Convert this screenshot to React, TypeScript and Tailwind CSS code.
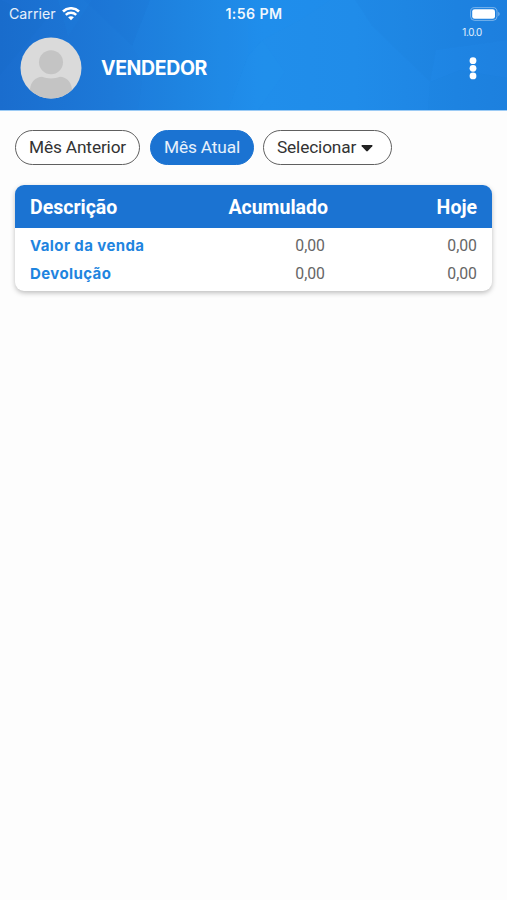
import { clsx } from 'clsx';

type Row = { label: string; total: string; today: string };

const ROWS: Row[] = [
  { label: 'Valor da venda', total: '0,00', today: '0,00' },
  { label: 'Devolução', total: '0,00', today: '0,00' },
];

function HeaderBackground() {
  return (
    <svg
      className="absolute inset-0 size-full"
      viewBox="0 0 507 110"
      preserveAspectRatio="none"
      aria-hidden="true"
    >
      <defs>
        <linearGradient id="sky" x1="0" y1="0" x2="1" y2="0">
          <stop offset="0" stopColor="#1a6dce" />
          <stop offset="0.22" stopColor="#1d79d8" />
          <stop offset="0.36" stopColor="#1e83e1" />
          <stop offset="0.52" stopColor="#208eeb" />
          <stop offset="0.7" stopColor="#208ce9" />
          <stop offset="0.9" stopColor="#1e84e3" />
          <stop offset="1" stopColor="#1e81e0" />
        </linearGradient>
      </defs>
      <rect width="507" height="110" fill="url(#sky)" />
      <path d="M150 0 132 46 144 66 138 110H228L248 55V0Z" fill="#2196f3" opacity="0.06" />
      <path d="M58 0 68 36 92 0Z" fill="#2196f3" opacity="0.08" />
      <path d="M0 0 46 20 0 75Z" fill="#1565c0" opacity="0.06" />
      <path d="M84 0H150L132 46Z" fill="#1565c0" opacity="0.05" />
      <path d="M248 56 262 40 285 72 258 110H228Z" fill="#2196f3" opacity="0.14" />
      <path d="M248 0 248 56 262 40 300 20 330 0Z" fill="#2196f3" opacity="0.1" />
      <path d="M355 0 372 26 430 82 436 50 507 40V0Z" fill="#1976d2" opacity="0.1" />
      <path d="M430 82 428 110H507V78L460 70Z" fill="#1976d2" opacity="0.06" />
    </svg>
  );
}

function WifiIcon() {
  return (
    <svg width="18" height="14" viewBox="0 0 18 14" fill="none" aria-hidden="true">
      <path d="M1 4.5C5.4.2 12.6.2 17 4.5" stroke="white" strokeWidth="2.6" />
      <path d="M3.8 7.8C6.7 5 11.3 5 14.2 7.8" stroke="white" strokeWidth="2.4" />
      <path d="M6.1 10.3C7.7 8.8 10.3 8.8 11.9 10.3L9 13.3Z" fill="white" />
    </svg>
  );
}

function BatteryIcon() {
  return (
    <svg width="31" height="14" viewBox="0 0 31 14" aria-hidden="true">
      <rect x="0.6" y="0.6" width="26.4" height="12.8" rx="4" fill="none" stroke="white" strokeOpacity="0.4" />
      <rect x="2.2" y="2.2" width="22.8" height="9.6" rx="2.4" fill="white" />
      <path d="M28.3 4.8C30.1 5.5 30.1 8.5 28.3 9.2Z" fill="white" fillOpacity="0.45" />
    </svg>
  );
}

function Avatar() {
  return (
    <svg width="62" height="62" viewBox="0 0 62 62" aria-hidden="true">
      <clipPath id="avatar">
        <circle cx="31" cy="31" r="30.5" />
      </clipPath>
      <g clipPath="url(#avatar)">
        <rect width="62" height="62" fill="#dadada" />
        <circle cx="31" cy="25.3" r="12" fill="#c4c4c4" />
        <path d="M10 52C11 44 16 40 22 39.7C28 42 34 42 40 39.7C46 40 51 44 52 52V62H10Z" fill="#c4c4c4" />
      </g>
    </svg>
  );
}

function Header() {
  return (
    <header className="relative h-[110px] bg-[#1e82e1] text-white shadow-[0_1px_0_#9ccbf5]">
      <HeaderBackground />
      <div className="relative grid h-7 grid-cols-[1fr_auto_1fr] items-center pl-[9px] pr-[6px]">
        <div className="flex items-center gap-[6px]">
          <span className="font-[Inter,sans-serif] text-[14.2px] text-white/90">Carrier</span>
          <WifiIcon />
        </div>
        <span className="mr-[2px] pb-px font-[Inter,sans-serif] text-[14.2px] font-semibold tracking-[0.4px] text-white/95">
          1:56 PM
        </span>
        <div className="flex justify-end">
          <BatteryIcon />
        </div>
      </div>
      <div className="relative flex h-20 items-center pl-5 pr-[30px]">
        <Avatar />
        <h1 className="ml-[19px] pt-[2px] font-[Inter,sans-serif] text-[19.5px] font-bold tracking-[-0.4px]">
          VENDEDOR
        </h1>
        <button type="button" className="ml-auto" aria-label="Menu">
          <svg width="8" height="24" viewBox="0 0 8 24" fill="white">
            <circle cx="4" cy="4.7" r="3.4" />
            <circle cx="4" cy="12.3" r="3.4" />
            <circle cx="4" cy="19.9" r="3.4" />
          </svg>
        </button>
        <span className="absolute right-[25px] -top-[2px] font-[Inter,sans-serif] text-[9.8px] leading-[13px] tracking-[-0.3px] text-white/90">
          1.0.0
        </span>
      </div>
    </header>
  );
}

function Filter({ active, className, children }: { active?: boolean; className: string; children: React.ReactNode }) {
  return (
    <button
      type="button"
      className={clsx(
        'flex h-[35px] items-center rounded-full border-[1.5px] pt-px pl-[13px] text-[17.3px] tracking-[-0.15px] whitespace-nowrap',
        active ? 'border-[#1b73d2] bg-[#1b73d2] text-white/90' : 'border-[#606060] bg-white text-[#333]',
        className,
      )}
    >
      {children}
    </button>
  );
}

function SalesTable() {
  return (
    <section className="mx-[15px] mt-5 overflow-hidden rounded-[9px] bg-white pb-1 shadow-[0_2px_5px_rgba(0,0,0,0.25)]">
      <table className="w-full table-fixed">
        <thead className="bg-[#1b73d2] text-[19.5px] text-white">
          <tr className="h-[42.5px]">
            <th className="w-[170px] pt-[2px] pl-[15px] text-left font-bold">Descrição</th>
            <th className="w-[143px] pt-[2px] text-right font-bold">Acumulado</th>
            <th className="pt-[2px] pr-[15px] text-right font-bold">Hoje</th>
          </tr>
        </thead>
        <tbody className="text-[15.8px] text-[#666]">
          <tr className="h-[3.5px]" />
          {ROWS.map((row) => (
            <tr key={row.label} className="h-7">
              <td className="pt-[2px] pl-[15px] font-[Inter,sans-serif] text-[15px] font-bold tracking-[0.4px] text-[#1f85df]">
                {row.label}
              </td>
              <td className="pt-[2px] pr-[3px] text-right">{row.total}</td>
              <td className="pt-[2px] pr-[15px] text-right">{row.today}</td>
            </tr>
          ))}
        </tbody>
      </table>
    </section>
  );
}

export default function App() {
  return (
    <main className="min-h-screen bg-[#fdfdfd] font-[Roboto,sans-serif]">
      <Header />
      <nav className="flex gap-[10px] pl-[15px] pt-5">
        <Filter className="w-[125px]">Mês Anterior</Filter>
        <Filter active className="w-[104px]">
          Mês Atual
        </Filter>
        <Filter className="-ml-px w-[129px]">
          Selecionar
          <svg className="ml-[5px]" width="12" height="7" viewBox="0 0 12 7" fill="#222" aria-hidden="true">
            <path d="M1 0H11Q12 .4 11.3 1.2L6.8 6.1Q6 6.9 5.2 6.1L.7 1.2Q0 .4 1 0Z" />
          </svg>
        </Filter>
      </nav>
      <SalesTable />
    </main>
  );
}
